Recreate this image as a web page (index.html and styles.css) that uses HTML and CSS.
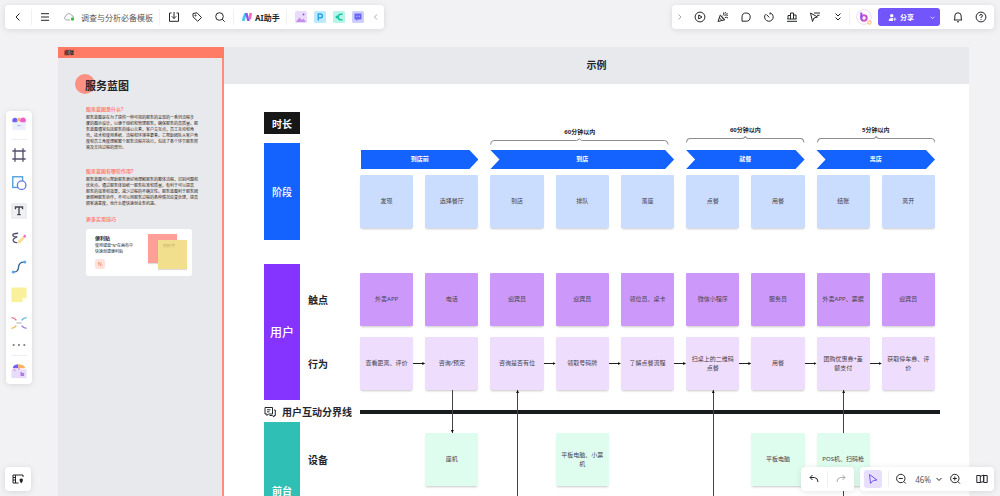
FILE: index.html
```html
<!DOCTYPE html>
<html lang="zh-CN">
<head>
<meta charset="utf-8">
<title>调查与分析必备模板</title>
<link rel="stylesheet" href="styles.css">
</head>
<body>
<div class="app">
  <main class="board">
    <aside class="guide">
      <div class="guide-tab">模版</div>
      <div class="guide-body">
        <h1 class="guide-title">服务蓝图</h1>
        <h2 class="guide-heading">服务蓝图是什么?</h2>
        <p class="guide-text">服务蓝图是在为了提供一种可视的服务的呈现的一系列流程步<br>骤的图示设计，以便于组织和管理服务，确保服务的高质量。服<br>务蓝图通常包括服务的核心元素，客户交互点，员工互动和角<br>色，技术和使用系统、流程和环境等要素。它帮助团队从客户角<br>度和员工角度理解整个服务流程并执行，包括了各个环节服务所<br>需及支持过程的部分。</p>
        <h2 class="guide-heading guide-heading-second">服务蓝图有哪些作用?</h2>
        <p class="guide-text">服务蓝图可以帮助服务更好地理解服务的整体流程，识别问题和<br>优化点。通过服务体验统一服务标准和质量，有利于可以提高<br>服务的效率和效果，减少过程的不确定性。服务蓝图利于服务团<br>更顺畅服务协作，不可以用服务过程的各种情况应变处理，提高<br>顾客满意度，也什么能快速创业务机遇。</p>
        <h2 class="guide-heading guide-heading-tips">更多实用技巧</h2>
        <section class="tip">
          <div class="tip-copy">
            <h3 class="tip-title">便利贴</h3>
            <p class="tip-text">使用键盘“N”在画布中<br>快速创建便利贴</p>
            <kbd class="tip-key">N</kbd>
          </div>
          <div class="tip-art">
            <span class="tip-note tip-note-red"></span>
            <span class="tip-note tip-note-yellow">添加文字</span>
          </div>
        </section>
      </div>
    </aside>

    <section class="frame">
      <header class="frame-head">示例</header>
      <div class="blueprint">
        <div class="lane">
          <div class="lane-blocks">
            <div class="block block-time">时长</div>
            <div class="block block-stage">阶段</div>
          </div>
          <div class="lane-body lane-body-stage">
            <div class="columns durations">
              <div class="duration duration-short span-3 from-3">60分钟以内
                <svg viewBox="0 0 180 7" preserveAspectRatio="none"><path d="M.5 6.500Q1 2.500 4 2.500H87Q89 2.500 90 .5Q91 2.500 93 2.500H176Q179 2.500 179.500 6.500"/></svg></div>
              <div class="duration duration-high span-2">60分钟以内
                <svg viewBox="0 0 120 7" preserveAspectRatio="none"><path d="M.5 6.500Q1 2.500 4 2.500H57Q59 2.500 60 .5Q61 2.500 63 2.500H116Q119 2.500 119.500 6.500"/></svg></div>
              <div class="duration duration-high span-2">5分钟以内
                <svg viewBox="0 0 120 7" preserveAspectRatio="none"><path d="M.5 6.500Q1 2.500 4 2.500H57Q59 2.500 60 .5Q61 2.500 63 2.500H116Q119 2.500 119.500 6.500"/></svg></div>
            </div>
            <div class="columns phases">
              <div class="phase phase-first span-2">到店前</div>
              <div class="phase span-3">到店</div>
              <div class="phase span-2">就餐</div>
              <div class="phase span-2">离店</div>
            </div>
            <div class="columns">
              <div class="note blue">发现</div>
              <div class="note blue">选择餐厅</div>
              <div class="note blue">到店</div>
              <div class="note blue">排队</div>
              <div class="note blue">落座</div>
              <div class="note blue">点餐</div>
              <div class="note blue">用餐</div>
              <div class="note blue">结账</div>
              <div class="note blue">离开</div>
            </div>
          </div>
        </div>

        <div class="lane lane-user">
          <div class="block block-user">用户</div>
          <div class="lane-body">
            <div class="row">
              <div class="row-label">触点</div>
              <div class="columns">
                <div class="note purple">外卖APP</div>
                <div class="note purple">电话</div>
                <div class="note purple">迎宾员</div>
                <div class="note purple">迎宾员</div>
                <div class="note purple">领位员、桌卡</div>
                <div class="note purple">微信小程序</div>
                <div class="note purple">服务员</div>
                <div class="note purple">外卖APP、票据</div>
                <div class="note purple">迎宾员</div>
              </div>
            </div>
            <div class="row">
              <div class="row-label">行为</div>
              <div class="columns">
                <div class="note lilac next">查看距离、评价</div>
                <div class="note lilac">咨询/预定<i class="link link-down"></i></div>
                <div class="note lilac next">咨询是否有位<i class="link link-up link-long"></i></div>
                <div class="note lilac next">领取号码牌</div>
                <div class="note lilac next">了解点餐流程</div>
                <div class="note lilac next">扫桌上的二维码点餐<i class="link link-up link-long"></i></div>
                <div class="note lilac next">用餐</div>
                <div class="note lilac next">团购优惠券+差额支付<i class="link link-up"></i></div>
                <div class="note lilac">获取停车券、评价</div>
              </div>
            </div>
          </div>
        </div>

        <div class="boundary">
          <div class="boundary-name">
            <svg class="boundary-icon" viewBox="0 0 12 12"><path d="M1 1.500H8.500V8H4.500L3 9.500V8H1ZM3 3.800H6.500M3 5.800H5.500M10 4H11.300V9.500H10V11L8.300 9.500H5.500"/></svg>
            用户互动分界线
          </div>
          <div class="boundary-line"></div>
        </div>

        <div class="lane">
          <div class="block block-front">前台</div>
          <div class="lane-body lane-body-front">
            <div class="row">
              <div class="row-label">设备</div>
              <div class="columns">
                <div class="note green from-2">座机</div>
                <div class="note green from-4">平板电脑、小票机</div>
                <div class="note green from-7">平板电脑</div>
                <div class="note green">POS机、扫码枪<i class="link"></i></div>
              </div>
            </div>
          </div>
        </div>
      </div>
    </section>
  </main>

  <nav class="bar bar-file" aria-label="文件">
    <button class="tool tool-wide" aria-label="返回"><svg viewBox="0 0 12 12"><path d="M7.500 2.500L4 6L7.500 9.500"/></svg></button>
    <span class="rule"></span>
    <button class="tool tool-wide" aria-label="菜单"><svg viewBox="0 0 12 12"><path d="M2 2.700H10M2 6H10M2 9.300H10"/></svg></button>
    <button class="doc"><svg viewBox="0 0 12 12"><path class="s-grey" d="M7 9H3.500A2.200 2.200 0 0 1 3 4.800A3 3 0 0 1 8.700 4.500Q10.300 4.800 10.600 6.300"/><circle class="f-green" cx="9.500" cy="8" r="1.700"/></svg>调查与分析必备模板</button>
    <span class="rule"></span>
    <span class="group">
      <button class="tool" aria-label="导出"><svg viewBox="0 0 12 12"><path d="M3.500 2H1.500V10.300H10.500V2H8.500M6 1V7.500M3.800 5.300L6 7.500L8.200 5.300"/></svg></button>
      <button class="tool" aria-label="标签"><svg viewBox="0 0 12 12"><path d="M2 2.500L6 1.800L10.500 6.500L6.700 10.300L2 5.800Z"/><circle cx="4.500" cy="4.500" r=".6"/></svg></button>
      <button class="tool" aria-label="搜索"><svg viewBox="0 0 12 12"><circle cx="5.500" cy="5.500" r="3.800"/><path d="M8.300 8.300L10.700 10.700"/></svg></button>
    </span>
    <span class="rule"></span>
    <button class="ai"><svg viewBox="0 0 12 12"><path class="f-cyan" d="M3.500 2H6L3.500 10H1Q1.500 5 3.500 2Z"/><path class="f-violet" d="M4 2H6.500L8.500 10H6.300Z"/><path class="f-pink" d="M8.500 2H11Q11 7 8.500 10L7.500 6Z"/></svg>AI助手</button>
    <span class="rule"></span>
    <span class="apps">
      <button class="app-icon" aria-label="图片"><svg viewBox="0 0 12 12"><rect class="f-lav" width="12" height="12" rx="1.500"/><path class="f-mauve" d="M1 11L4.500 6.500L7 9L8.500 7.500L11 11Z"/><circle class="f-violet" cx="8.500" cy="3.500" r="1"/></svg></button>
      <button class="app-icon" aria-label="演示"><svg viewBox="0 0 12 12"><rect class="f-sky" width="12" height="12" rx="1.500"/><path class="s-sky" d="M4.300 9.500V3H6.500A1.900 1.900 0 0 1 6.500 6.800H4.300"/></svg></button>
      <button class="app-icon" aria-label="导图"><svg viewBox="0 0 12 12"><rect class="f-mint" width="12" height="12" rx="1.500"/><path class="s-mint" d="M9.500 3.200H7Q5.500 3.500 5 6Q5.500 8.500 7 8.800H9.500"/><circle class="f-teal" cx="4" cy="6" r="1.500"/></svg></button>
      <button class="app-icon" aria-label="文档"><svg viewBox="0 0 12 12"><rect class="f-peri" width="12" height="12" rx="1.500"/><path class="f-indigo" d="M2.500 2.500H9.500V8.500H6L4.500 10V8.500H2.500Z"/><path class="s-peri" d="M4.500 4.700V6M6 4.700V6M7.500 4.700V6"/></svg></button>
    </span>
    <button class="tool tool-narrow faint" aria-label="收起"><svg viewBox="0 0 12 12"><path d="M7 3.500L4.500 6L7 8.500"/></svg></button>
  </nav>

  <nav class="bar bar-share" aria-label="协作">
    <button class="tool tool-narrow faint" aria-label="展开"><svg viewBox="0 0 12 12"><path d="M4.500 3.500L7 6L4.500 8.500"/></svg></button>
    <button class="tool" aria-label="播放"><svg viewBox="0 0 12 12"><circle cx="6" cy="6" r="4.900"/><path d="M4.700 4V8L8 6Z"/></svg></button>
    <button class="tool" aria-label="庆祝"><svg viewBox="0 0 12 12"><path d="M3.300 4L1 10.500L8 8.700ZM2.500 7L5 9.500M4 5L6.500 8.500M6 4.500Q7.500 3.500 6.500 1.500M8 6.500Q9.500 5.800 11 7M7.500 5L10.500 2M9.500 4.500L11 4M8 2.500L8.500 1"/></svg></button>
    <button class="tool" aria-label="评论"><svg viewBox="0 0 12 12"><path d="M2 10.200V6A4.100 4.100 0 1 1 6 10.200Z"/></svg></button>
    <button class="tool" aria-label="计时器"><svg viewBox="0 0 12 12"><path d="M7 1.800A4.300 4.300 0 1 1 2.500 3.300M6.300 6.500L3.500 3.500M7 1.800V3.500"/></svg></button>
    <button class="tool" aria-label="投票"><svg viewBox="0 0 12 12"><path d="M2 8V4.500H4.500V8M4.500 8V2H7.500V8M7.500 4H10V8M1.500 8H10.500M1 10.300H11"/></svg></button>
    <button class="tool" aria-label="激光笔"><svg viewBox="0 0 12 12"><path d="M1.500 2L8.500 6L5 7L3.500 10.500ZM5 2H11M8 4.300H10.500"/></svg></button>
    <button class="tool" aria-label="更多"><svg viewBox="0 0 12 12"><path d="M3.500 2.500L6 5L8.500 2.500M3.500 6.500L6 9L8.500 6.500"/></svg></button>
    <span class="rule"></span>
    <button class="avatar" aria-label="账户"><svg viewBox="0 0 16 16"><defs><linearGradient id="brand" gradientUnits="userSpaceOnUse" x1="4" y1="0" x2="12" y2="0"><stop offset="0" stop-color="#6a50f5"/><stop offset=".5" stop-color="#ee52b8"/><stop offset="1" stop-color="#a64cf3"/></linearGradient></defs><circle class="avatar-ring" cx="8" cy="8" r="7.300"/><path class="avatar-mark" d="M5.300 3.500V9"/><circle class="avatar-mark" cx="8" cy="9" r="2.700"/><circle class="avatar-badge" cx="13.500" cy="13.500" r="1.700"/></svg></button>
    <div class="share">
      <button class="share-main"><svg viewBox="0 0 12 12"><circle class="f-white" cx="5" cy="3.500" r="2.300"/><path class="f-white" d="M1 10.500Q1 6.500 5 6.500H6.500V10.500Z"/><path class="s-white" d="M9 6V10.500M7 8.200H11"/></svg>分享</button>
      <button class="share-more" aria-label="分享选项"><svg viewBox="0 0 12 12"><path class="s-white" d="M3.500 5L6 7.500L8.500 5"/></svg></button>
    </div>
    <span class="group">
      <button class="tool" aria-label="通知"><svg viewBox="0 0 12 12"><path d="M2 9H10L9.200 8V5A3.200 3.200 0 0 0 2.800 5V8ZM5 10.800H7"/></svg></button>
      <button class="tool" aria-label="帮助"><svg viewBox="0 0 12 12"><circle cx="6" cy="6" r="4.900"/><path d="M4.500 4.800Q4.700 3.500 6 3.500Q7.500 3.500 7.500 4.800Q7.500 5.700 6 6.300V7M6 8.200V9"/></svg></button>
    </span>
  </nav>

  <nav class="palette" aria-label="绘图工具">
    <button class="pick" aria-label="模板"><svg viewBox="0 0 18 18"><circle class="f-indigo" cx="4.500" cy="5" r="3"/><path class="f-orange" d="M6 6L9 1L12 6Z"/><circle class="f-magenta" cx="13.500" cy="5" r="3.200"/><path class="f-paper" d="M1.500 7H16.500V16H1.500Z"/><path class="s-peri" d="M7 10.500Q9 12 11 10.500"/></svg></button>
    <span class="palette-rule"></span>
    <button class="pick" aria-label="画框"><svg viewBox="0 0 18 18"><path class="s-plum" d="M4.500 1.500V16.500M13.500 1.500V16.500M1.500 4.500H16.500M1.500 13.500H16.500"/></svg></button>
    <button class="pick" aria-label="形状"><svg viewBox="0 0 18 18"><rect class="s-blue" x="2" y="2" width="11" height="12"/><circle class="shape-dot" cx="12" cy="11.500" r="4.800"/></svg></button>
    <button class="pick" aria-label="文本"><svg viewBox="0 0 18 18"><rect class="text-box" x="1" y="1" width="16" height="16"/><path class="s-dark" d="M5 7V4.500H13V7M9 4.500V13M7 13H11"/></svg></button>
    <button class="pick" aria-label="画笔"><svg viewBox="0 0 18 18"><path class="s-plum" d="M8 2.500Q2 2.500 2 5Q3 7 7 6.500Q2 8 2.500 11Q3.500 13.500 7 13"/><path class="f-butter" d="M7 14.500L8 11L14 5.500L16 7.500L10.500 13.500Z"/><path class="f-magenta" d="M13.500 6L15.500 4L17 6L16 7.500Z"/></svg></button>
    <button class="pick" aria-label="连线"><svg viewBox="0 0 18 18"><path class="s-navy" d="M3 14.500Q8 15 8.500 9Q9 3.500 14.500 3.500"/><circle class="f-blue" cx="2.500" cy="14.500" r="1.700"/><circle class="f-blue" cx="15.500" cy="3.500" r="1.700"/></svg></button>
    <button class="pick" aria-label="便利贴"><svg viewBox="0 0 18 18"><path class="f-yellow" d="M2 .5H16Q17.500 .5 17.500 2V12L12.500 17H2Q.5 17 .5 15.500V2Q.5 .5 2 .5Z"/><path class="f-pale" d="M17.500 12H13.500Q12.500 12 12.500 13V17Z"/></svg></button>
    <button class="pick" aria-label="思维导图"><svg viewBox="0 0 18 18"><path class="s-red" d="M.5 3Q4 3 6 6"/><path class="s-cyan" d="M17.500 3Q14 3 12 6"/><path class="s-gold" d="M.5 15Q4 15 6 12"/><path class="s-violet" d="M17.500 15Q14 15 12 12"/><path class="s-grey" d="M6 9H12"/></svg></button>
    <button class="pick pick-short" aria-label="更多工具"><svg viewBox="0 0 18 18"><path class="f-grey" d="M2 8H4V10H2ZM8 8H10V10H8ZM14 8H16V10H14Z"/></svg></button>
    <span class="palette-rule"></span>
    <button class="pick" aria-label="素材"><svg viewBox="0 0 18 18"><path class="f-indigo" d="M2 6Q2 2 8 1.500V6Z"/><path class="f-orange" d="M8 6V1.500Q15 1.500 16 6Z"/><path class="f-lav" d="M.5 7H17.500V17H.5Z"/><path class="s-pink" d="M9 4V8M3 7L5 9"/><path class="s-violet" d="M11.500 10V14H14V12H12"/></svg></button>
  </nav>

  <div class="bar bar-map"><button class="tool tool-wide" aria-label="小地图"><svg viewBox="0 0 12 12"><path d="M6.500 10H1V2H11V4M3.500 2V10M1 4.500H3.500M1 7H3.500"/><path class="f-dark" d="M7.500 6.800A1.800 1.800 0 0 1 11 6.800Q11 8.500 9.200 10.500Q7.500 8.500 7.500 6.800Z"/></svg></button></div>

  <div class="bottom">
    <div class="bar">
      <button class="tool tool-wide" aria-label="撤销"><svg viewBox="0 0 12 12"><path d="M4.500 2L2 4.500L4.500 7M2 4.500H6.500Q10 5 10 9"/></svg></button>
      <span class="rule"></span>
      <button class="tool tool-wide faint" aria-label="重做"><svg viewBox="0 0 12 12"><path d="M7.500 2L10 4.500L7.500 7M10 4.500H5.500Q2 5 2 9"/></svg></button>
    </div>
    <div class="bar bar-zoom">
      <button class="select" aria-label="选择"><svg viewBox="0 0 12 12"><path class="s-accent" d="M2.500 1.500L10 7L6.200 7.500L3.500 10.500Z"/></svg></button>
      <span class="rule"></span>
      <button class="tool" aria-label="缩小"><svg viewBox="0 0 12 12"><circle cx="5.800" cy="5.500" r="4.200"/><path d="M3.800 5.500H7.800M8.800 8.500L10.800 10.500"/></svg></button>
      <button class="level">46%<svg viewBox="0 0 12 12"><path d="M3.500 5L6 7.500L8.500 5"/></svg></button>
      <button class="tool tool-zoom-in" aria-label="放大"><svg viewBox="0 0 12 12"><circle cx="5.800" cy="5.500" r="4.200"/><path d="M3.800 5.500H7.800M5.800 3.500V7.500M8.800 8.500L10.800 10.500"/></svg></button>
      <button class="tool map-view" aria-label="页面"><svg viewBox="0 0 12 12"><path d="M.8 2.500H4.300V9.500H.8ZM4.300 3.500L7.700 2V8.500L4.300 9.500M7.700 2.500H11.200V9.500H7.700Z"/></svg></button>
    </div>
  </div>
</div>
</body>
</html>
```
FILE: styles.css
```css
* { box-sizing: border-box; }
body, h1, h2, h3, p { margin: 0; }
body {
  font-family: "Noto Sans", "Noto Sans CJK SC", sans-serif;
  color: #24262b;
}
button {
  display: flex;
  align-items: center;
  justify-content: center;
  padding: 0;
  border: 0;
  background: none;
  color: inherit;
  font: inherit;
}
svg {
  display: block;
  fill: none;
  stroke: currentColor;
  stroke-width: 1;
}

.app {
  position: relative;
  height: 100vh;
  overflow: hidden;
  background: #f2f2f4;
}
.board {
  display: flex;
  height: 100%;
  padding: 47px 31px 0 58px;
}

/* Guide panel */
.guide {
  flex: none;
  width: 166px;
  background: #e7e9ec;
  border-right: 2px solid #ff8a80;
}
.guide-tab {
  height: 11px;
  padding-left: 6px;
  margin-right: -2px;
  background: #ff7b66;
  font-size: 5px;
  line-height: 11px;
  font-weight: 700;
}
.guide-body { padding: 22px 30px 0 28px; }
.guide-title {
  position: relative;
  z-index: 0;
  margin-left: -1px;
  font-size: 11px;
  line-height: 12px;
  font-weight: 700;
}
.guide-title::before {
  content: "";
  position: absolute;
  z-index: -1;
  left: -10px;
  top: -6px;
  width: 20px;
  height: 20px;
  border-radius: 50%;
  background: #fb9084;
}
.guide-heading {
  margin-top: 14px;
  color: #ff8374;
  font-size: 5px;
  line-height: 6px;
  font-weight: 700;
}
.guide-heading-second { margin-top: 17px; }
.guide-heading-tips { margin-top: 9px; }
.guide-text {
  margin-top: 3px;
  font-size: 4px;
  line-height: 6px;
  white-space: nowrap;
}
.tip {
  display: flex;
  justify-content: space-between;
  height: 47px;
  margin-top: 7px;
  padding: 5px 5px 5px 9px;
  border-radius: 3px;
  background: #fff;
}
.tip-title {
  margin-top: 1px;
  font-size: 5px;
  line-height: 6px;
  font-weight: 700;
}
.tip-text {
  margin-top: 2px;
  font-size: 4px;
  line-height: 6px;
  white-space: nowrap;
}
.tip-key {
  display: block;
  width: 10px;
  margin-top: 4px;
  border-radius: 2px;
  background: #ffe2de;
  color: #f0705f;
  font: 5px/10px "Noto Sans", sans-serif;
  text-align: center;
}
.tip-art {
  position: relative;
  width: 39px;
}
.tip-note {
  position: absolute;
  width: 29px;
  height: 29px;
  box-shadow: 0 1px 1px #0002;
}
.tip-note-red { left: 0; top: 0; background: #ffa098; }
.tip-note-yellow {
  right: 0;
  bottom: 2px;
  padding: 3px 5px;
  background: #f2df8d;
  color: #b7a660;
  font-size: 3px;
  line-height: 6px;
}

/* Blueprint frame */
.frame {
  flex: 1;
  min-width: 0;
  background: #fff;
}
.frame-head {
  height: 37px;
  background: #e7e9ec;
  font-size: 10px;
  line-height: 37px;
  font-weight: 700;
  text-align: center;
}
.blueprint { padding: 28px 34px 0 40px; }
.lane {
  display: flex;
  gap: 8px;
}
.lane-user { margin-top: 24px; }
.lane-blocks {
  display: flex;
  flex-direction: column;
  gap: 9px;
}
.block {
  display: flex;
  flex: none;
  align-items: center;
  justify-content: center;
  width: 36px;
  color: #fff;
  font-size: 10px;
  font-weight: 500;
}
.block-time { height: 22px; background: #171717; font-weight: 700; }
.block-stage { height: 97px; background: #1463ff; }
.block-user { height: 136px; background: #8533ff; font-size: 12px; }
.block-front { height: 136px; background: #2fbfb5; font-weight: 700; }
.lane-body {
  display: flex;
  flex: 1;
  flex-direction: column;
  gap: 11px;
  min-width: 0;
  padding-top: 9px;
}
.lane-body-stage {
  gap: 0;
  padding: 0 0 0 52px;
}
.lane-body-front { padding-top: 11px; }
.row {
  display: flex;
  gap: 8px;
  align-items: center;
}
.row-label {
  flex: none;
  width: 44px;
  font-size: 10px;
  line-height: 12px;
  font-weight: 700;
}
.columns {
  display: grid;
  flex: 1;
  grid-template-columns: repeat(9, minmax(0, 1fr));
  column-gap: 12px;
}
.span-2 { grid-column-end: span 2; }
.span-3 { grid-column-end: span 3; }
.from-2 { grid-column-start: 2; }
.from-3 { grid-column-start: 3; }
.from-4 { grid-column-start: 4; }
.from-7 { grid-column-start: 7; }
.durations {
  flex: none;
  height: 33px;
  margin-bottom: 5px;
}
.duration {
  align-self: end;
  font-size: 6px;
  line-height: 9px;
  font-weight: 700;
  text-align: center;
}
.duration-short { padding-right: 5px; }
.duration-high { padding-bottom: 2px; }
.duration svg {
  width: 100%;
  height: 7px;
  margin-top: 1px;
  stroke: #8b8d91;
}
.duration path { vector-effect: non-scaling-stroke; }
.phases {
  flex: none;
  margin-bottom: 6px;
}
.phase {
  background: #1463ff;
  clip-path: polygon(0 0, calc(100% - 9px) 0, 100% 50%, calc(100% - 9px) 100%, 0 100%, 9px 50%);
  color: #fff;
  font-size: 6px;
  line-height: 19px;
  font-weight: 700;
  text-align: center;
}
.phase-first {
  margin-left: 1px;
  clip-path: polygon(0 0, calc(100% - 9px) 0, 100% 50%, calc(100% - 9px) 100%, 0 100%);
}
.note {
  position: relative;
  display: flex;
  align-items: center;
  justify-content: center;
  height: 53px;
  padding: 0 4px;
  border-radius: 1px;
  box-shadow: 0 2px 2px -1px #00000038;
  color: #45424d;
  font-size: 6px;
  line-height: 9px;
  text-align: center;
}
.blue { background: #cbddff; }
.purple { background: #cc99fb; }
.lilac { background: #eeddfc; }
.green { background: #dffdef; }

/* Connectors */
.next::before {
  content: "";
  position: absolute;
  left: 100%;
  top: 26px;
  width: 10px;
  height: 1px;
  background: #222;
}
.next::after {
  content: "";
  position: absolute;
  left: calc(100% + 9px);
  top: 25px;
  width: 3px;
  height: 3px;
  background: #111;
  clip-path: polygon(0 0, 100% 50%, 0 100%);
}
.link {
  position: absolute;
  z-index: 1;
  left: 50%;
  top: 100%;
  width: 1px;
  height: 43px;
  background: #444;
}
.link-long { height: 1000px; }
.link-up::after, .link-down::after {
  content: "";
  position: absolute;
  left: -1px;
  width: 3px;
  height: 3px;
  background: #111;
}
.link-up::after {
  top: 0;
  clip-path: polygon(0 100%, 50% 0, 100% 100%);
}
.link-down::after {
  bottom: 0;
  clip-path: polygon(0 0, 50% 100%, 100% 0);
}
.boundary {
  display: flex;
  align-items: center;
  height: 22px;
  padding-top: 1px;
  margin-right: -5px;
}
.boundary-name {
  display: flex;
  flex: none;
  align-items: center;
  gap: 6px;
  width: 96px;
  font-size: 10px;
  line-height: 14px;
  font-weight: 700;
  white-space: nowrap;
}
.boundary-icon { width: 12px; height: 12px; }
.boundary-line {
  flex: 1;
  height: 4px;
  background: #191c1d;
}

/* Floating bars */
.bar, .palette {
  display: flex;
  align-items: center;
  border-radius: 4px;
  background: #fff;
  box-shadow: 0 1px 6px #0000001c;
  font-size: 8px;
}
.bar { height: 24px; }
.bar-file { position: absolute; left: 5px; top: 5px; }
.bar-share { position: absolute; right: 6px; top: 5px; }
.bar-map { position: absolute; left: 5px; bottom: 5px; }
.bottom {
  position: absolute;
  z-index: 2;
  right: 6px;
  bottom: 5px;
  display: flex;
  gap: 6px;
}
.rule {
  width: 1px;
  height: 16px;
  background: #f0f0f2;
}
.tool {
  width: 23px;
  height: 24px;
}
.tool svg { width: 12px; height: 12px; }
.tool-wide { width: 26px; }
.tool-narrow { width: 16px; }
.faint { color: #a9abb0; }
.group { display: flex; padding: 0 2px; }
.doc {
  gap: 6px;
  padding: 0 6px 0 5px;
  color: #55575c;
}
.doc svg { width: 12px; height: 12px; }
.ai {
  gap: 2px;
  padding: 0 6px 0 7px;
  font-weight: 700;
}
.ai svg { width: 12px; height: 12px; stroke: none; }
.apps {
  display: flex;
  gap: 7px;
  padding: 0 4px 0 8px;
}
.app-icon svg { width: 12px; height: 12px; }
.avatar { width: 28px; }
.avatar svg { width: 16px; height: 16px; }
.avatar-ring { fill: #fff; stroke: #f4d9ec; }
.avatar-mark { stroke: url(#brand); stroke-width: 2; }
.avatar-badge { fill: #fff; stroke: #f2b35d; }
.share {
  display: flex;
  height: 18px;
  margin-right: 4px;
  border-radius: 3px;
  background: #7355fc;
  color: #fff;
  font-size: 7px;
  font-weight: 700;
}
.share-main { gap: 3px; padding: 0 10px; }
.share-main svg { width: 9px; height: 9px; }
.share-more { width: 16px; }
.share-more svg { width: 9px; height: 9px; }
.select {
  width: 18px;
  height: 18px;
  margin: 0 6px 0 4px;
  border-radius: 3px;
  background: #e6dffe;
}
.select svg { width: 12px; height: 12px; }
.level { gap: 2px; padding: 0 0 0 3px; color: #55575c; }
.level svg { width: 12px; height: 12px; color: #24262b; }
.tool-zoom-in { width: 20px; }
.map-view { margin-left: 5px; margin-right: 1px; }

/* Tool palette */
.palette {
  position: absolute;
  left: 6px;
  top: 111px;
  flex-direction: column;
  gap: 10px;
  width: 26px;
  padding: 4px 0;
}
.palette-rule {
  width: 16px;
  height: 1px;
  margin: -4px 0;
  background: #eeeef0;
}
.pick { height: 18px; }
.pick svg { width: 16px; height: 16px; }
.pick-short { height: 8px; margin-top: -1px; }

/* Icon paint */
[class^="f-"] { stroke: none; }
.f-green { fill: #45b649; }
.f-cyan { fill: #43c9f5; }
.f-violet { fill: #8752f7; }
.f-pink { fill: #f26bc0; }
.f-lav { fill: #e9dcfb; }
.f-mauve { fill: #c58cec; }
.f-sky { fill: #bfe9fc; }
.f-mint { fill: #b8f5e9; }
.f-teal { fill: #1bc4a5; }
.f-peri { fill: #cdd0fd; }
.f-indigo { fill: #6b63f2; }
.f-orange { fill: #fbb45c; }
.f-magenta { fill: #ee5fcb; }
.f-paper { fill: #eceffc; }
.f-butter { fill: #f8dd94; }
.f-blue { fill: #58a9ed; }
.f-yellow { fill: #faf09b; }
.f-pale { fill: #fffbd8; }
.f-grey { fill: #85878c; }
.f-white { fill: #fff; }
.f-dark { fill: #24262b; }
.s-grey { stroke: #a3a6a9; }
.s-sky { stroke: #26a7e4; stroke-width: 1.500; }
.s-mint { stroke: #1bc4a5; stroke-width: 1.500; }
.s-white { stroke: #fff; }
.s-peri { stroke: #a4abef; }
.s-plum { stroke: #55506f; stroke-width: 1.500; }
.s-blue { stroke: #4a9ddb; stroke-width: 1.500; }
.shape-dot { fill: #fff; stroke: #6e7be0; stroke-width: 1.500; }
.text-box { fill: #f0f1f5; stroke: #dfe1e8; }
.s-dark { stroke: #44434f; stroke-width: 1.500; }
.s-navy { stroke: #35618e; stroke-width: 1.500; }
.s-red { stroke: #eb7189; stroke-width: 1.500; }
.s-cyan { stroke: #50b8df; stroke-width: 1.500; }
.s-gold { stroke: #eeb75c; stroke-width: 1.500; }
.s-violet { stroke: #a873e2; stroke-width: 1.500; }
.s-pink { stroke: #e895d4; stroke-width: 1.500; }
.s-accent { stroke: #6d55e8; }
```
